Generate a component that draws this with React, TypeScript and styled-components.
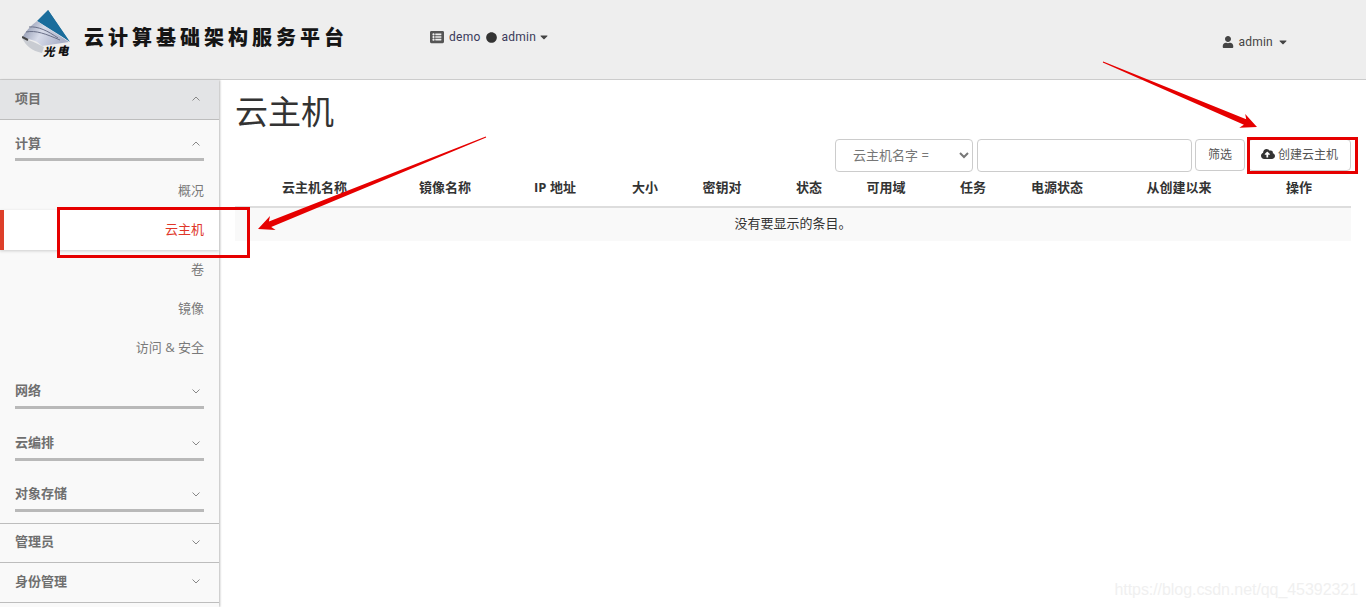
import React from "react";
import styled, { createGlobalStyle } from "styled-components";
import { FaCaretDown, FaCircle, FaCloudUploadAlt, FaListAlt, FaUser } from "react-icons/fa";

const Global = createGlobalStyle`
  html, body { margin: 0; padding: 0; background: #fff; height: 607px; overflow: hidden; }
  body { font-family: "Open Sans", "Noto Sans CJK SC", sans-serif; font-size: 13px; color: #333; }
  * { box-sizing: border-box; }
`;

const Page = styled.div`
  position: relative;
  width: 1366px;
  height: 607px;
  overflow: hidden;
  display: flex;
  flex-direction: column;
`;

const Header = styled.header`
  flex: 0 0 80px;
  display: flex;
  align-items: flex-start;
  padding-left: 22px;
  background: #eee;
  border-bottom: 1px solid #ccc;
`;

const LogoMark = styled.svg`
  flex: 0 0 48px;
  margin-top: 10px;
  width: 48px;
  height: 48px;
`;

const Brand = styled.div`
  margin: 23px 0 0 14px;
  width: 272px;
  font-family: "Noto Sans CJK SC", sans-serif;
  font-size: 20px;
  font-weight: 900;
  line-height: 28px;
  letter-spacing: 4px;
  color: #151515;
  white-space: nowrap;
`;

const HeaderMenu = styled.div<{ $top: number }>`
  display: flex;
  align-items: center;
  gap: 5px;
  margin-top: ${(p) => p.$top}px;
  height: 20px;
  font-family: "Roboto", sans-serif;
  font-size: 12px;
  letter-spacing: 0.25px;
  color: #3a3a5a;
  svg { flex: none; }
`;

const ProjectMenu = styled(HeaderMenu)`
  margin-left: 74px;
`;

const UserMenu = styled(HeaderMenu)`
  margin-left: auto;
  margin-right: 77px;
  gap: 4px;
  color: #444;
`;

const Caret = styled(FaCaretDown)<{ $pull?: number }>`
  margin-left: ${(p) => p.$pull ?? 0}px;
  color: #444;
`;

const Body = styled.div`
  flex: 1;
  display: flex;
  min-height: 0;
`;

const Sidebar = styled.nav`
  flex: 0 0 219px;
  background: #f9f9f9;
  box-shadow: 1px 0 2px #bbb;
  z-index: 1;
`;

const Panel = styled.div<{ $open?: boolean }>`
  display: flex;
  align-items: center;
  justify-content: space-between;
  height: ${(p) => (p.$open ? 40 : 39.5)}px;
  padding: 0 19px 5px 15px;
  background: ${(p) => (p.$open ? "#e3e4e6" : "transparent")};
  border-bottom: 1px solid #bdbdbd;
  font-weight: 700;
  color: #6f6f6f;
`;

const GroupTitle = styled.div<{ $gap?: number }>`
  display: flex;
  align-items: center;
  justify-content: space-between;
  height: 41px;
  margin: ${(p) => p.$gap ?? 0}px 15px 0 15px;
  padding: 10px 4px 4px 0;
  border-bottom: 3px solid #b9b9b9;
  font-weight: 700;
  color: #6f6f6f;
`;

const ItemList = styled.div`
  margin: 9.6px 0 0.6px;
`;

const Item = styled.div<{ $active?: boolean }>`
  display: flex;
  align-items: center;
  justify-content: flex-end;
  height: ${(p) => (p.$active ? 40 : 39.2)}px;
  padding: 0 15px 2px 0;
  color: ${(p) => (p.$active ? "#e0372a" : "#7a7a7a")};
  background: ${(p) => (p.$active ? "#fff" : "transparent")};
  border-left: ${(p) => (p.$active ? "4px solid #dd3f2a" : "0")};
  box-shadow: ${(p) => (p.$active ? "0 1px 3px #ccc" : "none")};
`;

const Divider = styled.div`
  height: 12px;
  border-bottom: 1px solid #bdbdbd;
`;

const ChevronMark = styled.svg`
  flex: none;
  width: 8px;
  height: 5px;
  margin-top: 3px;
  fill: none;
  stroke: #888;
  stroke-width: 1;
`;

const Main = styled.main`
  flex: 1;
  display: flex;
  flex-direction: column;
  padding: 0 15px 0 16px;
  min-width: 0;
`;

const Title = styled.h1`
  margin: 9px 0 0;
  height: 46px;
  font-size: 33px;
  font-weight: 400;
  line-height: 46px;
  color: #333;
`;

const Toolbar = styled.div`
  display: flex;
  justify-content: flex-end;
  align-items: flex-start;
  gap: 3px;
  margin-top: 4px;
  height: 33px;
`;

const FilterSelect = styled.select`
  width: 138px;
  height: 33px;
  padding: 0 0 2px 13px;
  font: inherit;
  color: #777;
  background: #fff;
  border: 1px solid #ccc;
  border-radius: 4px;
  margin-right: 1px;
`;

const FilterInput = styled.input`
  width: 215px;
  height: 33px;
  background: #fff;
  border: 1px solid #ccc;
  border-radius: 4px;
`;

const Button = styled.button<{ $w: number }>`
  display: flex;
  align-items: center;
  justify-content: center;
  gap: 3px;
  width: ${(p) => p.$w}px;
  height: 32px;
  padding: 0 0 2px;
  font: inherit;
  font-size: 12px;
  color: #555;
  background: #fff;
  border: 1px solid #ccc;
  border-radius: 4px;
`;

const Table = styled.table`
  width: 1116px;
  margin-top: 2px;
  table-layout: fixed;
  border-collapse: collapse;
`;

const Th = styled.th<{ $w: number; $pad?: number }>`
  width: ${(p) => p.$w}px;
  height: 33px;
  padding: 0 ${(p) => p.$pad ?? 0}px 8px 0;
  font-size: 13px;
  font-weight: 700;
  text-align: center;
  color: #333;
  border-bottom: 2px solid #ddd;
`;

const Empty = styled.td`
  height: 34px;
  padding: 0 0 4px 0;
  text-align: center;
  font-size: 13px;
  color: #333;
  background: #f9f9f9;
`;

const Callout = styled.div<{ $x: number; $y: number; $w: number; $h: number }>`
  position: absolute;
  left: ${(p) => p.$x}px;
  top: ${(p) => p.$y}px;
  width: ${(p) => p.$w}px;
  height: ${(p) => p.$h}px;
  border: 3px solid #e60000;
  z-index: 3;
`;

const ArrowLayer = styled.svg`
  position: absolute;
  inset: 0;
  width: 1366px;
  height: 607px;
  pointer-events: none;
  z-index: 4;
`;

const Watermark = styled.div`
  position: absolute;
  right: 8px;
  bottom: 7px;
  font-family: "Liberation Sans", sans-serif;
  font-size: 16px;
  letter-spacing: -0.06px;
  line-height: 20px;
  color: #f0f0f0;
  z-index: 2;
`;

function arrowPoints(x1: number, y1: number, x2: number, y2: number) {
  const len = Math.hypot(x2 - x1, y2 - y1);
  const dx = (x2 - x1) / len;
  const dy = (y2 - y1) / len;
  const nx = -dy;
  const ny = dx;
  const at = (back: number, side: number) =>
    `${(x2 - dx * back + nx * side).toFixed(1)},${(y2 - dy * back + ny * side).toFixed(1)}`;
  return [at(len, 0.6), at(13, 3), at(16, 7.5), at(0, 0), at(16, -7.5), at(13, -3), at(len, -0.6)].join(" ");
}

const columns: [string, number, number?][] = [
  ["云主机名称", 159],
  ["镜像名称", 102],
  ["IP 地址", 118],
  ["大小", 62],
  ["密钥对", 92],
  ["状态", 82],
  ["可用域", 72],
  ["任务", 102],
  ["电源状态", 66],
  ["从创建以来", 178],
  ["操作", 83, 21],
];

const Chevron = ({ up }: { up?: boolean }) => (
  <ChevronMark viewBox="0 0 8 5" aria-hidden="true">
    <polyline points={up ? "0.5,4.5 4,1 7.5,4.5" : "0.5,0.5 4,4 7.5,0.5"} />
  </ChevronMark>
);

export default function App() {
  return (
    <Page>
      <Global />
      <Header>
        <LogoMark viewBox="0 0 48 48" aria-hidden="true">
          <defs>
            <linearGradient id="fan" x1="0" y1="0" x2="1" y2="0.3">
              <stop offset="0" stopColor="#7d86a0" />
              <stop offset="0.5" stopColor="#d8dcea" />
              <stop offset="1" stopColor="#a9b0c8" />
            </linearGradient>
          </defs>
          <polygon points="26,0 48,32 24,14" fill="#1a6d9c" />
          <polygon points="26,0 47,31 15,11" fill="#1a6d9c" />
          <path d="M15,11 L47,32 L20,36 C14,30 8,29 0,28 C3,22 8,16 15,11 Z" fill="url(#fan)" />
          <path d="M4,22 C14,20 24,24 38,30 M7,17 C16,16 26,21 36,28" stroke="#6a7088" strokeWidth="1" fill="none" />
          <path d="M0,28 C4,36 10,41 20,43 L22,37 C14,33 8,30 0,28 Z" fill="#c9ccd2" />
          <path d="M0,27 L6,30" stroke="#444" strokeWidth="2" />
          <text x="21" y="46" fontFamily="'Noto Sans CJK SC', sans-serif" fontWeight="900" fontSize="11.5" fontStyle="italic" fill="#111">光</text>
          <text x="35" y="45" fontFamily="'Noto Sans CJK SC', sans-serif" fontWeight="900" fontSize="11.5" fontStyle="italic" fill="#111">电</text>
        </LogoMark>
        <Brand>云计算基础架构服务平台</Brand>
        <ProjectMenu $top={27}>
          <FaListAlt size={14} color="#555" />
          <span>demo</span>
          <FaCircle size={11} color="#333" />
          <span>admin</span>
          <Caret size={12} $pull={-3} />
        </ProjectMenu>
        <UserMenu $top={32}>
          <FaUser size={12} color="#444" />
          <span>admin</span>
          <Caret size={12} />
        </UserMenu>
      </Header>
      <Body>
        <Sidebar>
          <Panel $open>
            项目
            <Chevron up />
          </Panel>
          <GroupTitle>
            计算
            <Chevron up />
          </GroupTitle>
          <ItemList>
            <Item>概况</Item>
            <Item $active>云主机</Item>
            <Item>卷</Item>
            <Item>镜像</Item>
            <Item>访问 &amp; 安全</Item>
          </ItemList>
          <GroupTitle>
            网络
            <Chevron />
          </GroupTitle>
          <GroupTitle $gap={11}>
            云编排
            <Chevron />
          </GroupTitle>
          <GroupTitle $gap={10}>
            对象存储
            <Chevron />
          </GroupTitle>
          <Divider />
          <Panel>
            管理员
            <Chevron />
          </Panel>
          <Panel>
            身份管理
            <Chevron />
          </Panel>
        </Sidebar>
        <Main>
          <Title>云主机</Title>
          <Toolbar>
            <FilterSelect defaultValue="name">
              <option value="name">云主机名字 =</option>
            </FilterSelect>
            <FilterInput />
            <Button $w={50}>筛选</Button>
            <Button $w={103}>
              <FaCloudUploadAlt size={14} color="#333" />
              创建云主机
            </Button>
          </Toolbar>
          <Table>
            <thead>
              <tr>
                {columns.map(([label, w, pad]) => (
                  <Th key={label} $w={w} $pad={pad}>
                    {label}
                  </Th>
                ))}
              </tr>
            </thead>
            <tbody>
              <tr>
                <Empty colSpan={columns.length}>没有要显示的条目。</Empty>
              </tr>
            </tbody>
          </Table>
        </Main>
      </Body>
      <Callout $x={57} $y={207} $w={193} $h={51} />
      <Callout $x={1247} $y={137} $w={111} $h={37} />
      <ArrowLayer viewBox="0 0 1366 607" aria-hidden="true">
        <polygon points={arrowPoints(1103, 62, 1257, 127)} fill="#e60000" />
        <polygon points={arrowPoints(486, 137, 258, 229)} fill="#e60000" />
      </ArrowLayer>
      <Watermark>https://blog.csdn.net/qq_45392321</Watermark>
    </Page>
  );
}
